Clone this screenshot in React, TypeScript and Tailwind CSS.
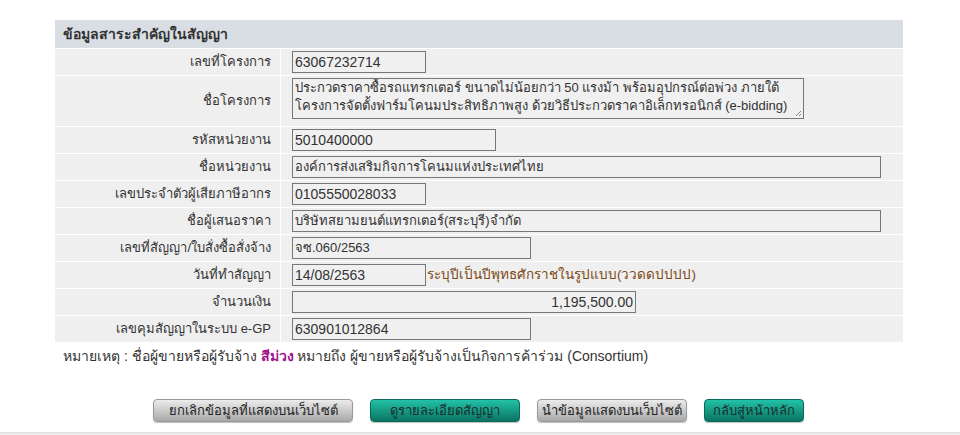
import React from 'react'

const font = { fontFamily: '"Liberation Sans", "Noto Sans", sans-serif' }

type Row = { label: string; value: string; w: string; right?: boolean; area?: boolean; hint?: string }

const rows: Row[] = [
  { label: 'เลขที่โครงการ', value: '63067232714', w: 'w-[134px]' },
  {
    label: 'ชื่อโครงการ',
    value: 'ประกวดราคาซื้อรถแทรกเตอร์ ขนาดไม่น้อยกว่า 50 แรงม้า พร้อมอุปกรณ์ต่อพ่วง ภายใต้ โครงการจัดตั้งฟาร์มโคนมประสิทธิภาพสูง ด้วยวิธีประกวดราคาอิเล็กทรอนิกส์ (e-bidding)',
    w: 'w-[512px]',
    area: true,
  },
  { label: 'รหัสหน่วยงาน', value: '5010400000', w: 'w-[204px]' },
  { label: 'ชื่อหน่วยงาน', value: 'องค์การส่งเสริมกิจการโคนมแห่งประเทศไทย', w: 'w-[589px]' },
  { label: 'เลขประจำตัวผู้เสียภาษีอากร', value: '0105550028033', w: 'w-[134px]' },
  { label: 'ชื่อผู้เสนอราคา', value: 'บริษัทสยามยนต์แทรกเตอร์(สระบุรี)จำกัด', w: 'w-[589px]' },
  { label: 'เลขที่สัญญา/ใบสั่งซื้อสั่งจ้าง', value: 'จซ.060/2563', w: 'w-[239px]' },
  { label: 'วันที่ทำสัญญา', value: '14/08/2563', w: 'w-[134px]', hint: 'ระบุปีเป็นปีพุทธศักราชในรูปแบบ(ววดดปปปป)' },
  { label: 'จำนวนเงิน', value: '1,195,500.00', w: 'w-[344px]', right: true },
  { label: 'เลขคุมสัญญาในระบบ e-GP', value: '630901012864', w: 'w-[239px]' },
]

function Btn({ text, teal, w }: { text: string; teal?: boolean; w: string }) {
  return (
    <button
      className={
        'h-[23px] rounded-[4px] text-[13px] leading-none shadow-[0_1px_1px_rgba(0,0,0,0.25)] ' + w + ' ' +
        (teal
          ? 'bg-gradient-to-b from-[#22c2a8] to-[#0b7563] text-[#1b2f2c] border border-[#0a6a5a]'
          : 'bg-gradient-to-b from-[#ececec] to-[#a9a9a9] text-[#222] border border-[#9a9a9a]')
      }
    >
      {text}
    </button>
  )
}

export default function App() {
  return (
    <div className="w-[960px] h-[435px] bg-white relative overflow-hidden text-[13px] text-[#333]" style={font}>
      <div className="pt-[20px] pl-[55px]">
        <div className="w-[848px]">
          <div className="h-[28px] bg-[#d9dee5] flex items-center pl-[8px] font-bold text-[14px] text-[#333]">
            ข้อมูลสาระสำคัญในสัญญา
          </div>
          {rows.map(r => {
            const latin = /^[\x00-\x7F]+$/.test(r.value)
            return (
              <div key={r.label} className="flex border-t border-white bg-[#efefef]">
                <div
                  className={
                    'w-[226px] shrink-0 border-r border-white flex items-center justify-end pr-[9px] ' +
                    (r.area ? 'h-[50px]' : 'h-[26px]')
                  }
                >
                  {r.label}
                </div>
                <div className={'flex pl-[11px] ' + (r.area ? 'pt-[2px]' : 'items-center')}>
                  {r.area ? (
                    <div className={r.w + ' relative h-[41px] border border-[#777] bg-[#f0f0f0] px-[2px] leading-[18px] overflow-hidden'}>
                      {r.value}
                      <svg className="absolute right-[1px] bottom-[1px]" width="8" height="8" viewBox="0 0 8 8">
                        <path d="M7 2L2 7M7 5L5 7" stroke="#888" strokeWidth="1" />
                      </svg>
                    </div>
                  ) : (
                    <div
                      className={
                        r.w + ' h-[22px] border border-[#777] bg-[#f0f0f0] px-[2px] flex items-center ' +
                        (latin ? 'text-[14px] ' : '') +
                        (r.right ? 'justify-end' : '')
                      }
                    >
                      {r.value}
                    </div>
                  )}
                  {r.hint && <span className="ml-[1px] text-[#7b4a16] self-center text-[13.5px]">{r.hint}</span>}
                </div>
              </div>
            )
          })}
        </div>
        <div className="mt-[4px] pl-[8px] h-[18px] text-[14px]">
          หมายเหตุ : ชื่อผู้ขายหรือผู้รับจ้าง <span className="text-[#a0168f] font-bold">สีม่วง</span> หมายถึง ผู้ขายหรือผู้รับจ้างเป็นกิจการค้าร่วม (Consortium)
        </div>
      </div>
      <div className="mt-[35px] flex pl-[153px] gap-[17px]">
        <Btn text="ยกเลิกข้อมูลที่แสดงบนเว็บไซต์" w="w-[200px]" />
        <Btn text="ดูรายละเอียดสัญญา" teal w="w-[150px]" />
        <Btn text="นำข้อมูลแสดงบนเว็บไซต์" w="w-[150px]" />
        <Btn text="กลับสู่หน้าหลัก" teal w="w-[100px]" />
      </div>
      <div className="absolute left-0 right-0 bottom-0 h-[3px] bg-gradient-to-b from-[#ddd] to-[#f3f3f3]" />
    </div>
  )
}
